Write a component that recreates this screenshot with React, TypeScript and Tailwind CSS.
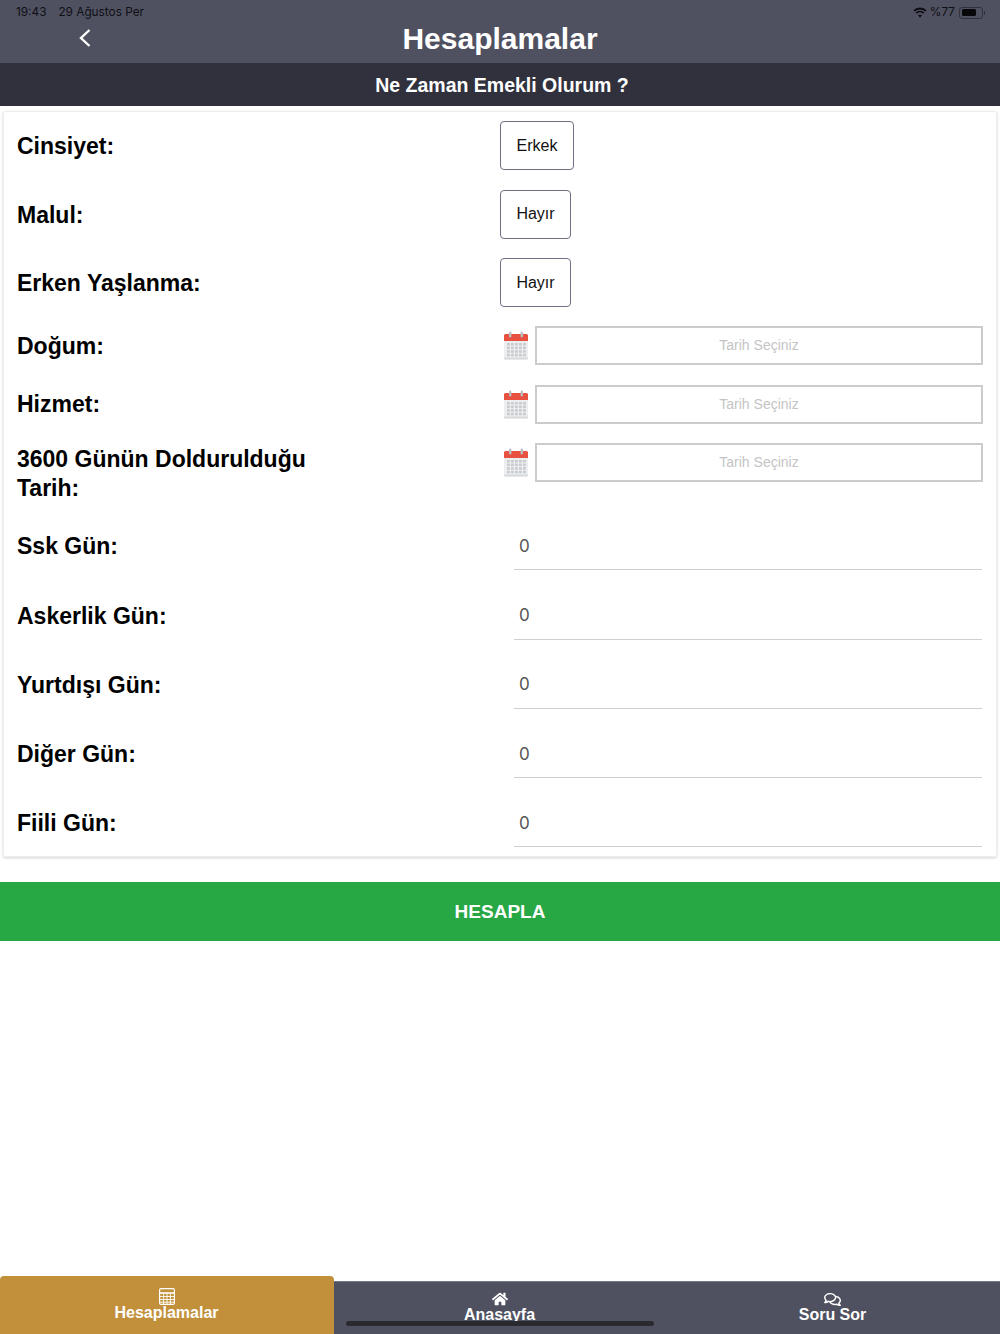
import { FaHome, FaRegComments } from 'react-icons/fa';

function CalendarIcon() {
  const cells = [];
  for (let r = 0; r < 4; r++) {
    for (let c = 0; c < 5; c++) {
      cells.push(<rect key={`${r}-${c}`} x={4 + c * 4} y={12 + r * 3.6} width="2.8" height="2.5" fill="#c8cbcf" />);
    }
  }
  return (
    <svg width="26" height="29" viewBox="0 0 26 29" className="shrink-0">
      <rect x="1" y="3" width="24" height="25.5" rx="1.5" fill="#eceeef" />
      <rect x="1" y="26.5" width="24" height="2" rx="1" fill="#d8dadc" />
      <path d="M1 10V4.5A1.5 1.5 0 0 1 2.5 3h21A1.5 1.5 0 0 1 25 4.5V10z" fill="#e8503f" />
      <rect x="6" y="0.5" width="2.4" height="6" rx="1.2" fill="#b9bdc1" />
      <rect x="17.6" y="0.5" width="2.4" height="6" rx="1.2" fill="#b9bdc1" />
      {cells}
    </svg>
  );
}

function CalculatorIcon() {
  return (
    <svg width="16" height="17" viewBox="0 0 16 17" fill="none" stroke="white">
      <rect x="0.6" y="0.6" width="14.8" height="15.8" rx="1.5" strokeWidth="1.2" />
      <path d="M1 5h14" strokeWidth="1.6" />
      <path d="M1 8.5h14M1 11.5h14M1 14.2h14M4.6 5v11M8 5v11M11.4 5v11" strokeWidth="0.9" />
    </svg>
  );
}

function ChoiceRow({ label, value, width, height }: { label: string; value: string; width: string; height: string }) {
  return (
    <div className={`flex ${height}`}>
      <div className="w-[483px] pt-[9px] text-[23px] leading-[33px] font-bold text-black">{label}</div>
      <div className={`flex h-[49px] items-center justify-center rounded-[4px] border border-[#6f7084] text-[16px] text-[#111] ${width}`}>
        {value}
      </div>
    </div>
  );
}

function DateRow({ label, height, top }: { label: string; height: string; top: string }) {
  return (
    <div className={`flex ${height}`}>
      <div className={`w-[483px] pr-[160px] text-[23px] leading-[29px] font-bold text-black ${top}`}>{label}</div>
      <div className="w-[35px] pl-[3px] pt-[5px]">
        <CalendarIcon />
      </div>
      <div className="flex h-[39px] w-[448px] items-center justify-center border-2 border-[#cccccc] text-[14px] text-[#c4c4c6]">
        Tarih Seçiniz
      </div>
    </div>
  );
}

function NumberRow({ label }: { label: string }) {
  return (
    <div className="flex h-[69.25px]">
      <div className="flex h-[49px] w-[483px] items-center pt-[2px] text-[23px] font-bold text-black">{label}</div>
      <div className="ml-[14px] flex h-[49.4px] w-[468px] items-center border-b border-[#cfcfcf] pl-[5px] pt-[3px] text-[17px] text-[#555] [font-family:'Inter',sans-serif]">
        0
      </div>
    </div>
  );
}

export default function App() {
  return (
    <div className="relative flex h-[1334px] w-[1000px] flex-col overflow-hidden bg-white [font-family:'Liberation_Sans',Arial,sans-serif]">
      <header className="h-[63px] bg-[#4f5161]">
        <div className="flex h-[24px] items-center justify-between pl-[16px] pr-[15px] pt-[1px] text-[11.8px] text-[#0f1015] [font-family:'Inter',sans-serif]">
          <div className="flex gap-[12px]">
            <span>19:43</span>
            <span>29 Ağustos Per</span>
          </div>
          <div className="flex items-center gap-[4px]">
            <svg className="mr-[-1px]" width="14" height="11" viewBox="0 0 14 11" fill="none" stroke="#0c0c10" strokeWidth="1.8">
              <path d="M1 3.8C4.4.7 9.6.7 13 3.8" />
              <path d="M3.2 6C5.3 4.2 8.7 4.2 10.8 6" />
              <path d="M7 10.8 5 8.3c1.2-.8 2.8-.8 4 0z" fill="#0c0c10" stroke="none" />
            </svg>
            <span>%77</span>
            <div className="flex items-center gap-[1px]">
              <div className="flex h-[12px] w-[24px] items-center rounded-[3px] border border-[#30313d] p-[1.5px]">
                <div className="h-full w-[77%] rounded-[1.5px] bg-[#08080a]" />
              </div>
              <div className="h-[4px] w-[1px] bg-[#30313d]" />
            </div>
          </div>
        </div>
        <div className="relative flex h-[39px] items-center justify-center text-[30px] font-bold text-white">
          <svg className="absolute left-[79px] top-[5px]" width="12" height="18" viewBox="0 0 12 18" fill="none" stroke="white" strokeWidth="2.4">
            <path d="M10.5 1 2 9l8.5 8" />
          </svg>
          <span className="relative top-[-5px]">Hesaplamalar</span>
        </div>
      </header>

      <div className="flex h-[43px] items-center justify-center bg-[#30313d] pl-[4px] pt-[2px] text-[19.5px] font-bold text-white">
        Ne Zaman Emekli Olurum ?
      </div>

      <main className="mx-[3px] mt-[5px] h-[746px] rounded-[2px] border border-[#eeeeee] pl-[13px] pt-[9px] shadow-[0_1px_3px_rgba(0,0,0,0.18)]">
        <ChoiceRow label="Cinsiyet:" value="Erkek" width="w-[74px]" height="h-[68.5px]" />
        <ChoiceRow label="Malul:" value="Hayır" width="w-[71px]" height="h-[68.5px]" />
        <ChoiceRow label="Erken Yaşlanma:" value="Hayır" width="w-[71px]" height="h-[68px]" />
        <DateRow label="Doğum:" height="h-[59px]" top="pt-[6px]" />
        <DateRow label="Hizmet:" height="h-[58px]" top="pt-[5px]" />
        <DateRow label="3600 Günün Doldurulduğu Tarih:" height="h-[78px]" top="pt-[2px]" />
        <NumberRow label="Ssk Gün:" />
        <NumberRow label="Askerlik Gün:" />
        <NumberRow label="Yurtdışı Gün:" />
        <NumberRow label="Diğer Gün:" />
        <NumberRow label="Fiili Gün:" />
      </main>

      <button className="mt-[25px] flex h-[59px] items-center justify-center bg-[#28a745] pt-[1px] text-[19px] font-bold text-white">
        HESAPLA
      </button>

      <div className="flex-1" />

      <nav className="flex h-[58px] items-end text-[16px] font-bold text-white">
        <div className="flex h-[58px] w-[334px] flex-col items-center rounded-t-[4px] bg-[#c2903a] pr-[1px] pt-[12px]">
          <CalculatorIcon />
          <span className="mt-[-2px] leading-[20px]">Hesaplamalar</span>
        </div>
        <div className="flex h-[53px] flex-1 flex-col items-center border-t border-[#777a88] bg-[#4f5161] pr-[2px] pt-[9px]">
          <FaHome size={16} />
          <span className="mt-[-2px] leading-[20px]">Anasayfa</span>
        </div>
        <div className="flex h-[53px] w-[333px] flex-col items-center border-t border-[#777a88] bg-[#4f5161] pr-[2px] pt-[9px]">
          <FaRegComments size={17} />
          <span className="mt-[-3px] leading-[20px]">Soru Sor</span>
        </div>
      </nav>

      <div className="absolute bottom-[8px] left-[346px] h-[5px] w-[308px] rounded-full bg-[#2a2a2e]" />
    </div>
  );
}
